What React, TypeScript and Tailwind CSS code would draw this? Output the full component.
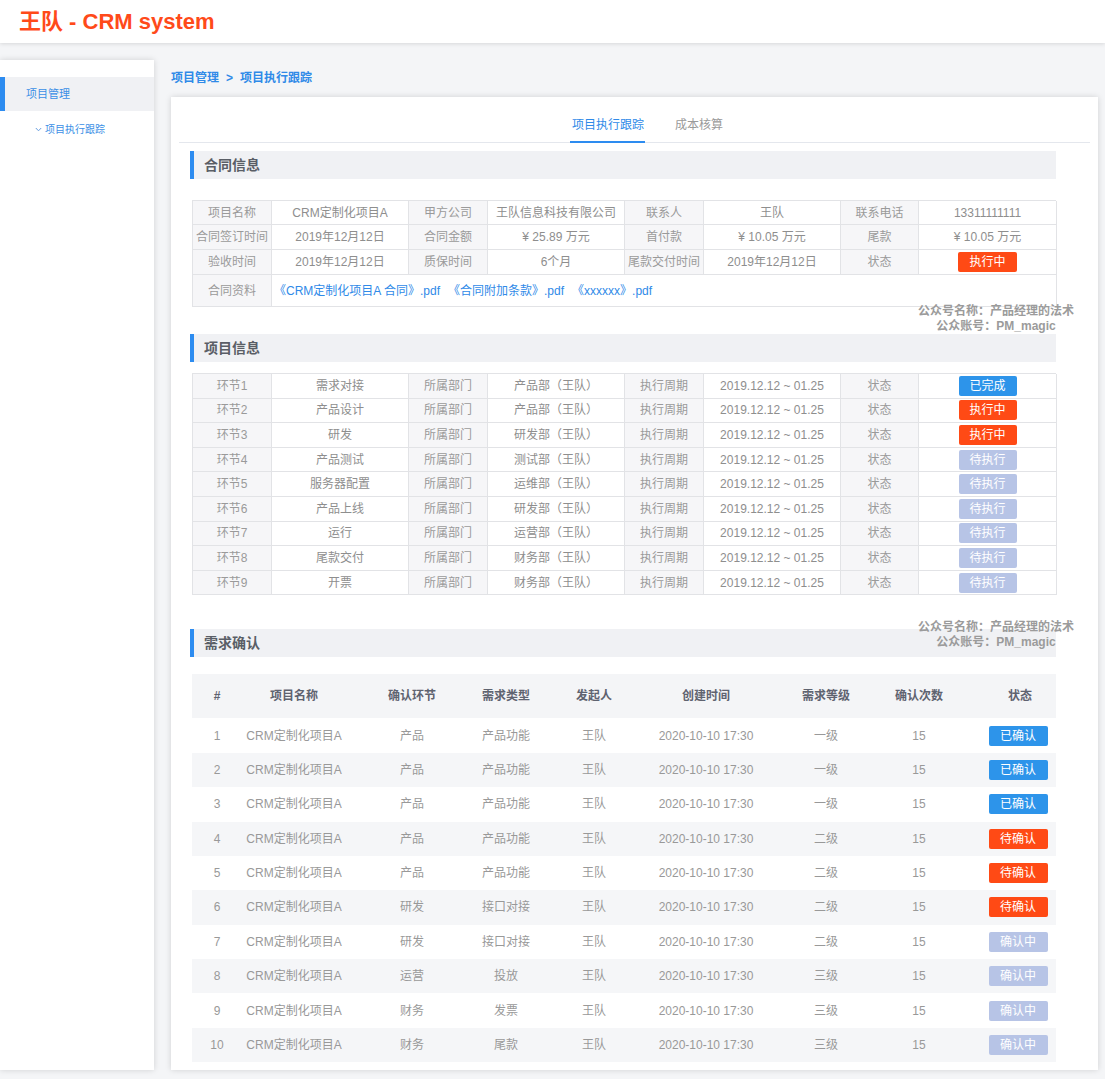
const font = "font-['Liberation_Sans','Noto_Sans_CJK_SC',sans-serif]";

type Status = "done" | "doing" | "wait";

const badgeColor: Record<Status, string> = {
  done: "bg-[#2d94ea]",
  doing: "bg-[#ff4a15]",
  wait: "bg-[#b7c4e6]",
};

function Badge({ s, text, w = "w-[59px]" }: { s: Status; text: string; w?: string }) {
  return (
    <span className={`${w} ${badgeColor[s]} inline-flex h-[20px] items-center justify-center rounded-[2px] text-[12px] leading-none text-white`}>
      {text}
    </span>
  );
}

function SectionTitle({ title }: { title: string }) {
  return (
    <div className="flex h-[28px] w-[866px] items-center border-l-4 border-[#2d8cf0] bg-[#f0f1f4] pl-[10px] text-[14px] font-bold text-[#5a5e66]">
      {title}
    </div>
  );
}

const cols = "grid grid-cols-[79px_137px_79px_137px_79px_137px_78px_138px]";
const cell = "flex items-center justify-center border-r border-b border-[#e2e3e6] text-[12px] text-[#8e8e8e]";
const label = `${cell} bg-[#f6f6f8] text-[#9a9a9a]`;

function ContractTable() {
  const rows = [
    ["项目名称", "CRM定制化项目A", "甲方公司", "王队信息科技有限公司", "联系人", "王队", "联系电话", "13311111111"],
    ["合同签订时间", "2019年12月12日", "合同金额", "¥ 25.89 万元", "首付款", "¥ 10.05 万元", "尾款", "¥ 10.05 万元"],
    ["验收时间", "2019年12月12日", "质保时间", "6个月", "尾款交付时间", "2019年12月12日", "状态", ""],
  ];
  const heights = ["h-[24px]", "h-[25px]", "h-[25px]"];
  return (
    <div className="ml-[2px] mt-[21px] w-[864px] border-l border-t border-[#e2e3e6]">
      {rows.map((r, i) => (
        <div key={i} className={`${cols} ${heights[i]}`}>
          {r.map((c, j) =>
            j === 7 && i === 2 ? (
              <div key={j} className={cell}>
                <Badge s="doing" text="执行中" />
              </div>
            ) : (
              <div key={j} className={j % 2 === 0 ? label : cell}>
                {c}
              </div>
            )
          )}
        </div>
      ))}
      <div className="grid h-[32px] grid-cols-[79px_785px]">
        <div className={label}>合同资料</div>
        <div className="flex items-center gap-[8px] border-r border-b border-[#e2e3e6] pl-[2px] text-[12px] text-[#2f8ae8]">
          <span>《CRM定制化项目A 合同》.pdf</span>
          <span>《合同附加条款》.pdf</span>
          <span>《xxxxxx》.pdf</span>
        </div>
      </div>
    </div>
  );
}

const stages: [string, string, Status, string][] = [
  ["需求对接", "产品部（王队）", "done", "已完成"],
  ["产品设计", "产品部（王队）", "doing", "执行中"],
  ["研发", "研发部（王队）", "doing", "执行中"],
  ["产品测试", "测试部（王队）", "wait", "待执行"],
  ["服务器配置", "运维部（王队）", "wait", "待执行"],
  ["产品上线", "研发部（王队）", "wait", "待执行"],
  ["运行", "运营部（王队）", "wait", "待执行"],
  ["尾款交付", "财务部（王队）", "wait", "待执行"],
  ["开票", "财务部（王队）", "wait", "待执行"],
];

function ProjectTable() {
  return (
    <div className="ml-[2px] mt-[11px] w-[864px] border-l border-t border-[#e2e3e6]">
      {stages.map((s, i) => (
        <div key={i} className={`${cols} h-[24.6px]`}>
          <div className={label}>环节{i + 1}</div>
          <div className={cell}>{s[0]}</div>
          <div className={label}>所属部门</div>
          <div className={cell}>{s[1]}</div>
          <div className={label}>执行周期</div>
          <div className={cell}>2019.12.12 ~ 01.25</div>
          <div className={label}>状态</div>
          <div className={cell}>
            <Badge s={s[2]} text={s[3]} w="w-[58px]" />
          </div>
        </div>
      ))}
    </div>
  );
}

const reqs: [string, string, string, Status, string][] = [
  ["产品", "产品功能", "一级", "done", "已确认"],
  ["产品", "产品功能", "一级", "done", "已确认"],
  ["产品", "产品功能", "一级", "done", "已确认"],
  ["产品", "产品功能", "二级", "doing", "待确认"],
  ["产品", "产品功能", "二级", "doing", "待确认"],
  ["研发", "接口对接", "二级", "doing", "待确认"],
  ["研发", "接口对接", "二级", "wait", "确认中"],
  ["运营", "投放", "三级", "wait", "确认中"],
  ["财务", "发票", "三级", "wait", "确认中"],
  ["财务", "尾款", "三级", "wait", "确认中"],
];

const reqCols = "grid grid-cols-[50px_104px_132px_56px_120px_104px_136px_50px_112px]";

function ReqTable() {
  const heads = ["#", "项目名称", "确认环节", "需求类型", "发起人", "创建时间", "需求等级", "确认次数"];
  return (
    <div className="ml-[2px] mt-[17px] w-[864px] text-[12px]">
      <div className={`${reqCols} h-[44px] items-center bg-[#f4f5f7] font-bold text-[#5f6370]`}>
        {heads.map((h) => (
          <div key={h} className="whitespace-nowrap text-center">
            {h}
          </div>
        ))}
        <div className="pl-[40px] text-center">状态</div>
      </div>
      {reqs.map((r, i) => (
        <div key={i} className={`${reqCols} h-[34.4px] items-center text-[#999] ${i % 2 === 1 ? "bg-[#f5f6f8]" : "bg-white"}`}>
          <div className="text-center">{i + 1}</div>
          <div className="whitespace-nowrap text-center">CRM定制化项目A</div>
          <div className="text-center">{r[0]}</div>
          <div className="whitespace-nowrap text-center">{r[1]}</div>
          <div className="text-center">王队</div>
          <div className="whitespace-nowrap text-center">2020-10-10 17:30</div>
          <div className="text-center">{r[2]}</div>
          <div className="text-center">15</div>
          <div className="flex justify-center pl-[36px]">
            <Badge s={r[3]} text={r[4]} />
          </div>
        </div>
      ))}
    </div>
  );
}

function Watermark({ top }: { top: string }) {
  return (
    <div className={`absolute left-[740px] ${top} w-[170px] text-center text-[12px] font-bold leading-[15px] text-[#9b9b9b]`}>
      <div>公众号名称：产品经理的法术</div>
      <div>公众账号：PM_magic</div>
    </div>
  );
}

export default function App() {
  return (
    <div className={`${font} h-[1079px] w-[1105px] overflow-hidden bg-[#f4f5f7]`}>
      <header className="flex h-[43px] items-center bg-white pl-[19px] shadow-[0_1px_4px_rgba(0,0,0,0.12)]">
        <h1 className="text-[22px] font-bold text-[#ff4a1a]">王队 - CRM system</h1>
      </header>
      <div className="flex pt-[17px]">
        <aside className="h-[1010px] w-[154px] bg-white shadow-[0_0_6px_rgba(0,0,0,0.15)]">
          <div className="mt-[17px] flex h-[34px] items-center border-l-[5px] border-[#2d8cf0] bg-[#f0f1f4] pl-[21px] text-[11px] text-[#3b8fe6]">
            项目管理
          </div>
          <div className="flex h-[37px] items-center pl-[35px] text-[10px] text-[#3b8fe6]">
            <svg width="7" height="5" viewBox="0 0 7 5" className="mr-[3px]">
              <path d="M0.8 1 L3.5 3.8 L6.2 1" fill="none" stroke="#6a9fe0" strokeWidth="1" />
            </svg>
            项目执行跟踪
          </div>
        </aside>
        <main className="ml-[17px]">
          <div className="flex h-[37px] items-start pt-[10px] text-[12px] font-bold leading-[16px] text-[#2f8ae8]">
            <span>项目管理</span>
            <span className="mx-[7px]">&gt;</span>
            <span>项目执行跟踪</span>
          </div>
          <section className="relative h-[973px] w-[927px] bg-white pl-[19px] shadow-[0_0_6px_rgba(0,0,0,0.15)]">
            <div className="-ml-[11px] mr-[8px] flex h-[46px] gap-[31px] border-b border-[#e4e7ed] pl-[393px] text-[12px] leading-[16px]">
              <div className="relative pt-[20px] text-[#2f8ae8]">
                项目执行跟踪
                <span className="absolute -bottom-px left-[-2px] right-[-1px] h-[2px] bg-[#2d8cf0]" />
              </div>
              <div className="pt-[20px] text-[#9a9a9a]">成本核算</div>
            </div>
            <div className="pt-[8px]">
              <SectionTitle title="合同信息" />
              <ContractTable />
              <div className="mt-[27px]">
                <SectionTitle title="项目信息" />
              </div>
              <ProjectTable />
              <div className="mt-[34px]">
                <SectionTitle title="需求确认" />
              </div>
              <ReqTable />
            </div>
            <Watermark top="top-[207px]" />
            <Watermark top="top-[523px]" />
          </section>
        </main>
      </div>
    </div>
  );
}
